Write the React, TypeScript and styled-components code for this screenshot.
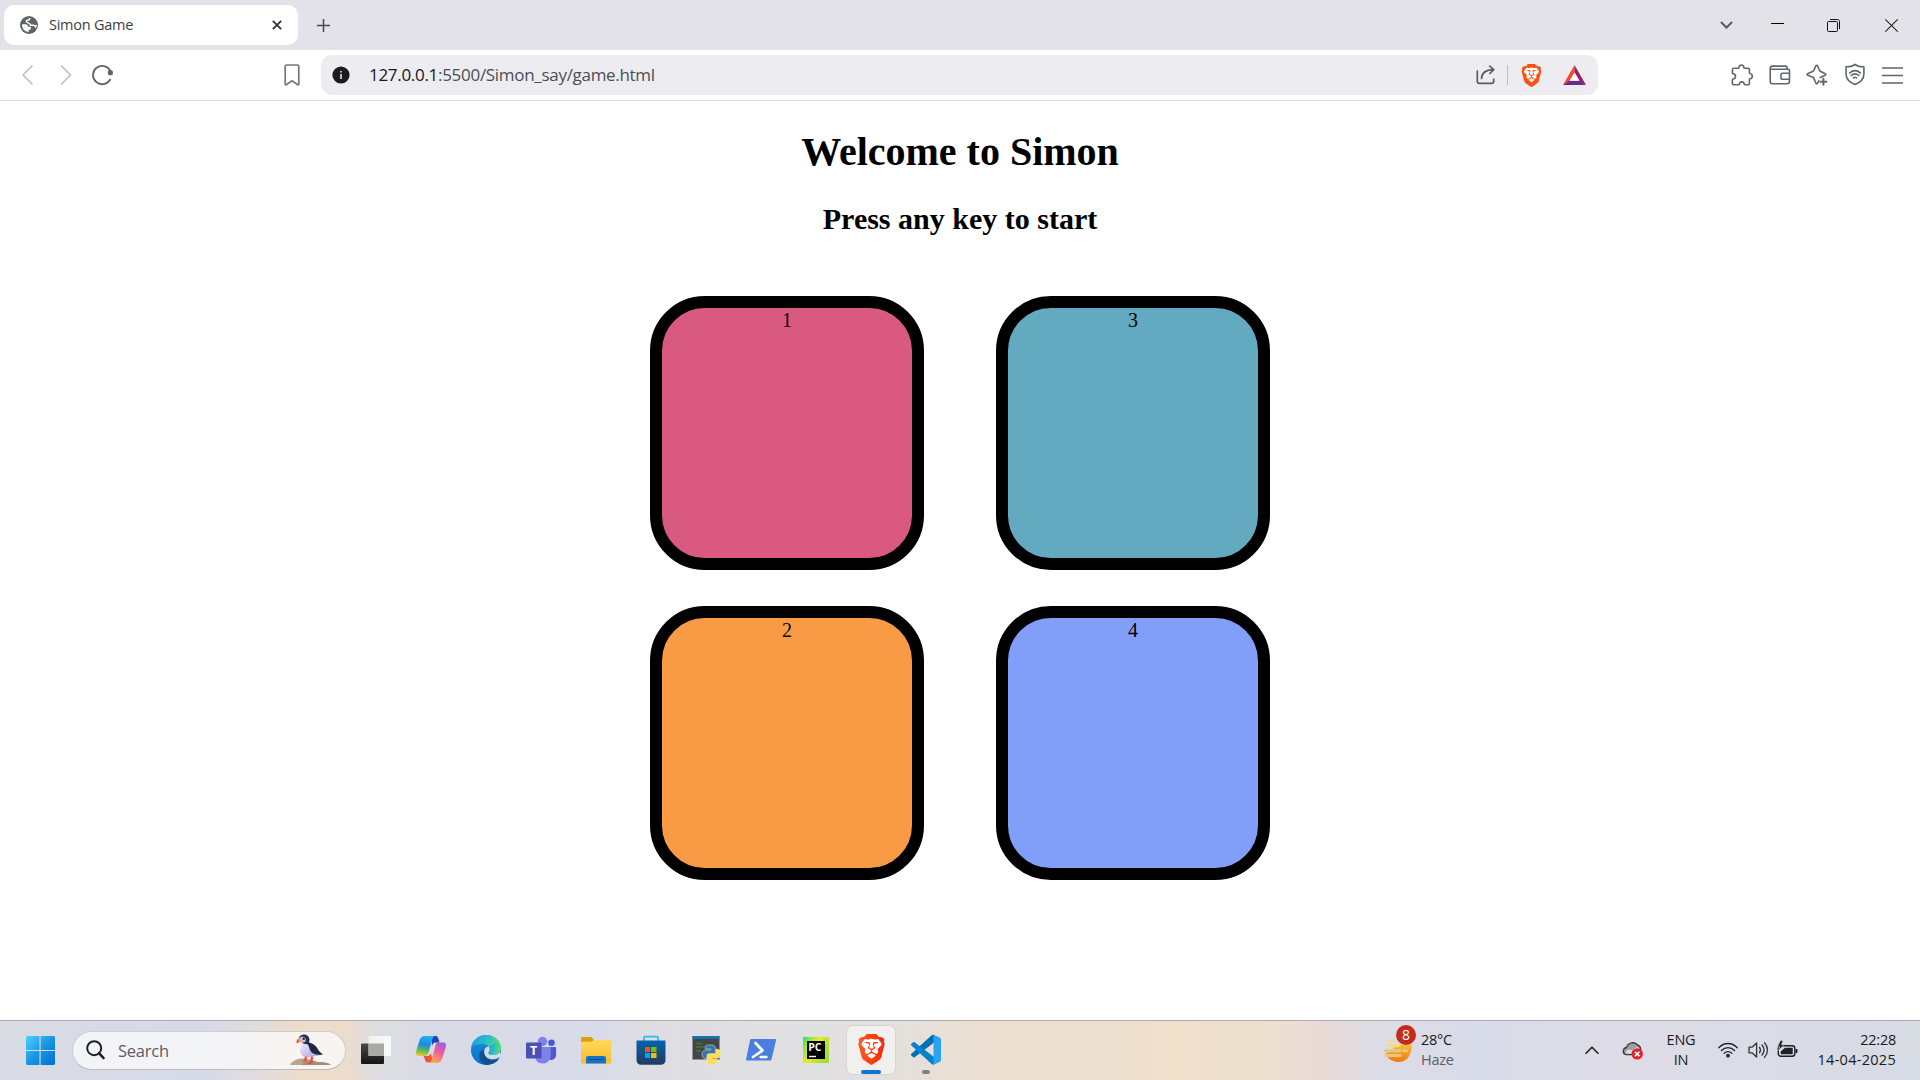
import React from 'react';
import styled, { createGlobalStyle } from 'styled-components';
import { SiBrave } from 'react-icons/si';

const GlobalStyle = createGlobalStyle`
  * { box-sizing: border-box; }
  body { margin: 0; background: #fff; overflow: hidden; }
  svg { display: block; flex: none; overflow: visible; }
`;

const ui = `"Open Sans", "Noto Sans", sans-serif`;

const Screen = styled.div`
  width: 1920px;
  height: 1080px;
  display: flex;
  flex-direction: column;
  background: #fff;
`;

/* ---------- Browser chrome ---------- */

const TabStrip = styled.header`
  height: 50px;
  flex: none;
  display: flex;
  align-items: center;
  padding-left: 4px;
  background: #e3e2e8;
`;

const Tab = styled.div`
  width: 294px;
  height: 40px;
  display: flex;
  align-items: center;
  padding: 0 16px;
  border-radius: 10px;
  background: #fff;
`;

const TabTitle = styled.span`
  flex: 1;
  margin-left: 11px;
  font: 400 14.5px/20px ${ui};
  letter-spacing: -0.25px;
  color: #3b3e43;
`;

const NewTab = styled.div`
  margin-left: 19px;
`;

const WindowControls = styled.div`
  margin-left: auto;
  display: flex;
  align-items: center;
  padding-right: 22px;
`;

const Spaced = styled.div<{ $left: number }>`
  margin-left: ${p => p.$left}px;
  flex: none;
`;

const Toolbar = styled.nav`
  height: 51px;
  flex: none;
  display: flex;
  align-items: center;
  border-bottom: 1px solid #e1e0e6;
  background: #fff;
`;

const AddressBar = styled.div`
  width: 1277px;
  height: 40px;
  margin-left: 21px;
  display: flex;
  align-items: center;
  padding: 0 12px 0 11px;
  border-radius: 11px;
  background: #ededf1;
`;

const Url = styled.span`
  flex: 1;
  margin-left: 19px;
  font: 400 17px/24px ${ui};
  letter-spacing: -0.3px;
  color: #4c4d54;
  b { font-weight: 400; color: #16161c; }
`;

const Divider = styled.i`
  width: 1px;
  height: 20px;
  margin-left: 11px;
  background: #bcbdc6;
`;

/* ---------- Game page ---------- */

const Page = styled.main`
  flex: 1;
  min-height: 0;
  display: flex;
  flex-direction: column;
  align-items: center;
  font-family: "Liberation Serif", "Times New Roman", serif;
  color: #000;
`;

const Title = styled.h1`
  margin: 28px 0 0;
  font-size: 40px;
  line-height: 46px;
`;

const Subtitle = styled.h2`
  margin: 27px 0 0;
  font-size: 30px;
  line-height: 34px;
`;

const Board = styled.section`
  margin-top: 60px;
  display: grid;
  grid-template-columns: repeat(2, 274px);
  grid-auto-rows: 274px;
  gap: 36px 72px;
`;

const Pad = styled.div<{ $color: string }>`
  border: 12px solid #000;
  border-radius: 20%;
  background: ${p => p.$color};
  font-size: 20px;
  line-height: 24px;
  text-align: center;
`;

/* ---------- Taskbar ---------- */

const TaskbarRoot = styled.footer`
  height: 60px;
  flex: none;
  display: flex;
  align-items: center;
  padding-bottom: 1px;
  border-top: 1px solid #aaa9ad;
  font-family: ${ui};
  background: linear-gradient(90deg,
    #d9dbe4 0, #d6dae8 200px, #dedcdf 250px, #ecdcca 300px, #ecdccc 345px,
    #dedce2 378px, #d8dbe6 430px, #d8dbe8 590px, #dddde3 650px, #e0e0e2 760px,
    #e2e0e0 870px, #e5dfdb 900px, #ebe0d3 980px, #ece0d1 1100px, #f1e0cc 1175px,
    #ece0d0 1260px, #e8dad6 1325px, #dddce6 1375px,
    #d8dbe8 1480px, #dddce7 1600px, #dcdbe6 1680px, #d9dce6 1780px, #d7dbe4 1920px);
`;

const Slot = styled.div<{ $active?: boolean }>`
  width: 48px;
  height: 48px;
  margin-right: 7px;
  flex: none;
  display: flex;
  flex-direction: column;
  align-items: center;
  padding-top: 8px;
  border-radius: 6px;
  background: ${p => (p.$active ? '#f1f0ef' : 'transparent')};
  box-shadow: ${p => (p.$active ? '0 0 0 1px rgba(120,110,100,.09)' : 'none')};
`;

const Indicator = styled.i<{ $width: number; $color: string }>`
  width: ${p => p.$width}px;
  height: 4px;
  margin-top: auto;
  flex: none;
  border-radius: 2px;
  background: ${p => p.$color};
`;

const SearchBox = styled.div`
  width: 274px;
  height: 39px;
  margin: 0 6px 0 1px;
  flex: none;
  display: flex;
  align-items: center;
  padding: 0 13px;
  border: 1px solid #cfcdd2;
  border-bottom-color: #bdbbc0;
  border-radius: 20px;
  background: linear-gradient(90deg, #f3f4f8 0, #f4f4f7 60%, #f9f4ef 82%, #f8f4f0 100%);
`;

const SearchText = styled.span`
  flex: 1;
  margin-left: 13px;
  font-size: 16.5px;
  letter-spacing: -0.25px;
  color: #5b5c60;
`;

const Weather = styled.div`
  margin-left: 425px;
  display: flex;
  align-items: center;
  gap: 7px;
`;

const WeatherIcon = styled.div`
  position: relative;
  width: 32px;
`;

const Badge = styled.span`
  position: absolute;
  top: -12px;
  left: 14px;
  width: 20px;
  height: 20px;
  border-radius: 50%;
  background: #c42b1c;
  color: #fff;
  font-size: 14px;
  line-height: 20px;
  text-align: center;
`;

const Lines = styled.div<{ $align: string; $width: number }>`
  width: ${p => p.$width}px;
  flex: none;
  text-align: ${p => p.$align};
  white-space: nowrap;
  font-size: 14.5px;
  line-height: 20px;
  letter-spacing: -0.25px;
  color: #1b1b1e;
`;

const Muted = styled.div`
  color: #5d5d63;
`;

const DateText = styled.div`
  letter-spacing: 0.28px;
`;

const Tray = styled.div`
  margin-left: auto;
  margin-right: 24px;
  display: flex;
  align-items: center;
`;

/* ---------- Icons ---------- */

const line = { fill: 'none', strokeLinecap: 'round', strokeLinejoin: 'round' } as const;

const Globe = () => (
  <svg width="18" height="18" viewBox="0 0 18 18">
    <circle cx="9" cy="9" r="9" fill="#5f6368" />
    <path d="M2 8.300h3.400c1.900 0 2.600.9 2.600 2.500h1.700c.9 0 1.300.5 1.300 1.300 0 1.600-.9 1.900-2.300 1.900v1.900C4.900 15.900 1.900 12.800 2 8.300z" fill="#fff" />
    <path d="M9.800 2.100c0 1.700-.9 2.200-2.600 2.200-.8 0-.9.6-.9 1.600 1.800 0 1.600 1.700 3 1.700 1 0 1.100 1 1.100 1.600h2.800c1.500 0 1.900.8 2.500 1.700l.5-2" fill="none" stroke="#fff" strokeWidth="1.400" />
  </svg>
);

const BraveMark = ({ size, gradient }: { size: number; gradient?: boolean }) => (
  <svg width={size} height={size} viewBox="0 0 24 24">
    <defs>
      <linearGradient id="braveFill" x1="0" x2="1">
        <stop offset="0" stopColor="#ff5a20" />
        <stop offset="1" stopColor="#f5260a" />
      </linearGradient>
    </defs>
    <path d="M6 3h12l2.500 4-2.500 10-6 4-6-4L3.500 7z" fill="#fff" />
    <SiBrave size={24} fill={gradient ? 'url(#braveFill)' : '#fb5010'} />
  </svg>
);

const Toolicons = {
  chevron: (flip: boolean) => (
    <svg width="12" height="20" viewBox="0 0 12 20">
      <path d={flip ? 'M1.500 1l9 9-9 9' : 'M10 1l-9 9 9 9'} {...line} stroke="#c0c1c5" strokeWidth="1.700" />
    </svg>
  ),
  reload: (
    <svg width="22" height="22" viewBox="0 0 22 22">
      <path d="M18.100 15.800A9.200 9.200 0 1 1 18.400 6.800" {...line} stroke="#5f636a" strokeWidth="1.800" />
      <circle cx="18.400" cy="8.700" r="2.600" fill="#5f636a" />
    </svg>
  ),
  bookmark: (
    <svg width="16" height="22" viewBox="0 0 16 22">
      <path d="M2.600 1h10.800c.8 0 1.400.6 1.400 1.400V20.200c0 .6-.7.9-1.100.5L8 16.800l-5.700 3.900c-.5.400-1.100.100-1.100-.5V2.400C1.200 1.600 1.800 1 2.600 1z" {...line} stroke="#75787f" strokeWidth="1.700" />
    </svg>
  ),
  info: (
    <svg width="18" height="18" viewBox="0 0 18 18">
      <circle cx="9" cy="9" r="8.600" fill="#1b1b20" />
      <path d="M9 8v5M9 5.100v1.300" stroke="#f2f2f5" strokeWidth="1.500" />
    </svg>
  ),
  share: (
    <svg width="20" height="20" viewBox="0 0 20 20">
      <path d="M1.300 6v10.200c0 1.200.9 2.100 2.100 2.100h12.200c1.200 0 2.100-.9 2.100-2.100V14" {...line} stroke="#5b5c66" strokeWidth="1.700" />
      <path d="M5.500 13.500C5.700 8 9.500 4.800 17.500 4.600M13.600 1.200l4.200 3.400-4 3.900" {...line} stroke="#5b5c66" strokeWidth="1.700" />
    </svg>
  ),
  bat: (
    <svg width="23" height="20" viewBox="0 0 23 20">
      <path d="M11.500 0v7.500L6.600 16 0 20z" fill="#ff4724" />
      <path d="M11.500 0v7.500l5 8.500L23 20z" fill="#9e1f63" />
      <path d="M0 20l6.600-4.500h9.900L23 20z" fill="#662d91" />
      <path d="M11.500 7.500l4.900 8.200H6.600z" fill="#fff" />
    </svg>
  ),
  puzzle: (
    <svg width="22" height="22" viewBox="0 0 22 22">
      <path d="M3 4.300h4.200c.5 0 .8-.3.800-.8C8.200 2 9 1 10.400 1s2.300 1 2.500 2.500c0 .5.300.8.800.8h3.700c.6 0 1 .4 1 1v3.500c0 .5.300.8.800.9 1.200.200 2.100 1.200 2.100 2.500s-.9 2.300-2.100 2.500c-.5.100-.8.400-.8.900v4c0 .7-.5 1.200-1.200 1.200h-3.100c-.6 0-.8-.4-.9-.9-.2-1.200-1.100-2-2.400-2s-2.200.8-2.400 2c-.1.500-.3.900-.9.900H2.600c-.7 0-1.200-.5-1.200-1.200v-3.800c0-.5.300-.8.800-.8 1.400-.2 2.300-1.200 2.300-2.600S3.600 10 2.200 9.800c-.5 0-.8-.3-.8-.8V5.900c0-1 .600-1.600 1.600-1.600z" {...line} stroke="#62666c" strokeWidth="1.600" />
    </svg>
  ),
  wallet: (
    <svg width="22" height="20" viewBox="0 0 22 20">
      <path d="M20.500 8V5.600c0-.8-.6-1.400-1.400-1.400H1.200M1.200 3.500C1.200 2 2 1.100 3.400 1.100h13c1 0 1.800.8 1.800 1.800v1.300M1.200 3.400v13.200c0 1.200.9 2.200 2.200 2.200h14.900c1.300 0 2.200-1 2.200-2.200V8.300h-7.100c-.8 0-1.400.6-1.400 1.400v3.200c0 .8.6 1.400 1.400 1.400h7.100" {...line} stroke="#62666c" strokeWidth="1.600" />
    </svg>
  ),
  sparkle: (
    <svg width="22" height="22" viewBox="0 0 22 22">
      <path d="M12.800 16.800l-1.400 2.500c-.4.700-1.200.7-1.500 0L7.500 13.600 1.700 11.200c-.7-.4-.7-1.200 0-1.500L7.500 7 10 1.700c.3-.7 1.100-.7 1.500 0L13.800 7l5.400 2.700c.7.300.7 1.100 0 1.500l-5 2.200" {...line} stroke="#62666c" strokeWidth="1.600" />
      <path d="M17.400 14.800v6M14.400 17.800h6" {...line} stroke="#62666c" strokeWidth="2" />
    </svg>
  ),
  shield: (
    <svg width="20" height="22" viewBox="0 0 20 22">
      <path d="M10 .4c2 1.700 5 2.500 8.900 2.400v7.500c0 4.500-3.200 7.900-8.900 10.300C4.300 18.200 1.100 14.800 1.100 10.300V2.800C5 2.900 8 2.100 10 .4z" {...line} stroke="#62666c" strokeWidth="1.600" />
      <path d="M4.700 8.900c3.200-2.700 7.400-2.700 10.600 0M6.300 11.400c2.300-1.900 5.100-1.900 7.400 0M8.400 13.800c1.100-.7 2.100-.7 3.200 0" {...line} stroke="#62666c" strokeWidth="1.600" />
    </svg>
  ),
  menu: (
    <svg width="21" height="20" viewBox="0 0 21 20">
      <path d="M0 3h21M0 10.500h21M0 18h21" stroke="#5f636a" strokeWidth="1.600" />
    </svg>
  ),
};

const Windows = () => (
  <svg width="32" height="32" viewBox="0 0 32 32">
    <defs>
      <linearGradient id="winFill" x1="0" y1="0" x2="1" y2="1">
        <stop offset="0" stopColor="#4fd0ff" />
        <stop offset=".5" stopColor="#1696e2" />
        <stop offset="1" stopColor="#0070d0" />
      </linearGradient>
    </defs>
    <path d="M3 2h12.500v14H2V3z M16.600 2H30l1 1v13H16.600z M2 17h13.500v14H3l-1-1z M16.600 17H31V30l-1 1H16.600z" fill="url(#winFill)" />
  </svg>
);

const Magnifier = () => (
  <svg width="19" height="20" viewBox="0 0 19 20">
    <circle cx="8.200" cy="8.200" r="7" fill="none" stroke="#202024" strokeWidth="2" />
    <path d="M13 13.200l4.600 5" stroke="#202024" strokeWidth="2.500" strokeLinecap="round" />
  </svg>
);

const Puffin = () => (
  <svg width="42" height="32" viewBox="0 0 42 32">
    <defs>
      <linearGradient id="belly" x1="0" y1="0" x2="1" y2="1">
        <stop offset="0" stopColor="#f3effa" />
        <stop offset="1" stopColor="#a99ad8" />
      </linearGradient>
    </defs>
    <path d="M0 31c2-4 7-6.500 13-6.500 7 0 9 3 15 3.500 6 .2 10 .5 13 3z" fill="#b8a78e" />
    <path d="M11 31c4-4 12-5 17-3 6 .2 10 .5 13 3z" fill="#9f9079" />
    <path d="M12.500 7c-1 4-3.500 9-1.500 13 2 3.500 7 4 11 2.500L31 21 20 8z" fill="url(#belly)" />
    <path d="M12 8.500c2 2 5 2 7 1l.5-4C19 1.500 15.500 0 12.500.8 10 1.500 8.500 3 9 5z" fill="#29304a" />
    <path d="M9.200 4.500c.7-2 4.500-2.500 6-.8 1.500 1.800.5 4.600-1.700 4.800-2 .2-4.300-1-4.300-4z" fill="#c5bfdc" />
    <circle cx="13.800" cy="4.800" r="1.200" fill="#20263b" />
    <path d="M9.500 4.300C7.500 4.600 6.300 6 6.500 9.200L11 7.500z" fill="#e8432e" />
    <path d="M9.800 4.200l-1.600.8.800 3.400 1.700-.7z" fill="#f2b648" />
    <path d="M18 8.500c5 .5 8 3 10 7 1.200 2 3.500 3.500 5 5.200-4 .5-9 0-11.500-2.500C18.500 15 20 12 16 8.800z" fill="#202944" />
    <path d="M15 22.500l-1 3.500-2 1.500h6l-1.500-1.800.5-3zM21 22.500l-1 5-3 2.300 4.500-.3 2-2-.8-1.500.5-3.500z" fill="#ef4b35" />
  </svg>
);

const TaskView = () => (
  <svg width="32" height="32" viewBox="0 0 32 32">
    <defs>
      <linearGradient id="tvDark" x2="0" y2="1"><stop stopColor="#484848" /><stop offset="1" stopColor="#151515" /></linearGradient>
      <linearGradient id="tvLight" x2="1" y2=".3"><stop stopColor="#f4f4f4" /><stop offset="1" stopColor="#fff" /></linearGradient>
    </defs>
    <rect x="1" y="9.500" width="23" height="20.500" rx="1" fill="url(#tvDark)" />
    <rect x="8.500" y="2" width="22.500" height="20" rx="1" fill="url(#tvLight)" opacity=".85" />
    <path d="M8.500 9.500H24V22H8.500z" fill="#a9a9a8" />
  </svg>
);

const Copilot = () => (
  <svg width="32" height="32" viewBox="0 0 32 32">
    <defs>
      <linearGradient id="cpA" x1=".4" y1="0" x2=".2" y2="1"><stop stopColor="#22b0f0" /><stop offset=".4" stopColor="#178be0" /><stop offset=".7" stopColor="#62b75c" /><stop offset="1" stopColor="#f1cf20" /></linearGradient>
      <linearGradient id="cpB" x1=".8" y1="0" x2=".3" y2="1"><stop stopColor="#a05be8" /><stop offset=".45" stopColor="#ee5d9e" /><stop offset="1" stopColor="#ffa64d" /></linearGradient>
    </defs>
    <path d="M16 2h4.500c2.300 0 2.700 2 3.300 4l.7 2.500h-4.200c-2 0-2.600 1.200-3.300 3.500z" fill="#1c44bd" />
    <path d="M8.500 22h4c2 0 2.700-1 3.400-3l2.200 9.500H13c-2.300 0-2.800-2-3.400-4z" fill="#f05535" />
    <path d="M9.300 2H20c-1.800.5-2.400 2.300-3 4.500l-3.500 12c-.6 2-1.200 3.500-3.600 3.500H4c-3 0-3.600-2-2.700-5.500l3.200-10C5.400 3.500 7 2 9.300 2z" fill="url(#cpA)" />
    <path d="M22 8.500h6c3 0 3.500 2.200 2.600 5.500l-3.300 10c-1 3-2.500 4.800-5 4.800H13.800c2-.4 2.600-2.300 3.200-4.300l3.200-12c.4-2 .7-4 1.800-4z" fill="url(#cpB)" />
  </svg>
);

const Edge = () => (
  <svg width="32" height="32" viewBox="0 0 32 32">
    <defs>
      <linearGradient id="edTop" x1="0" x2="1" y1=".3" y2=".6"><stop stopColor="#1a9be0" /><stop offset=".5" stopColor="#2ec0c8" /><stop offset="1" stopColor="#69df4a" /></linearGradient>
      <linearGradient id="edLeft" x2="0" y2="1"><stop stopColor="#1b91d8" /><stop offset="1" stopColor="#0b6fd0" /></linearGradient>
    </defs>
    <circle cx="16" cy="16" r="15" fill="url(#edLeft)" />
    <path d="M14 15c-3.500 5-.5 11 6 12 3 .4 6-.3 8.500-2.500C26 29 21 31.200 16 31c-6-1-8-9-6-13z" fill="#12508f" />
    <path d="M1.300 13C2.500 6 8.500 1 16 1c8.500 0 15 5.800 15 12.500 0 5-4 7.500-8 7.500-3 0-5-1-4.500-2 .8-1.500 1.300-2 1.300-3.500 0-3-3-5.500-8-5.500-4.500 0-8.500 1-10.500 3z" fill="url(#edTop)" />
    <path d="M18.800 12.500c1.500 2 1 4-.2 6-.8 1.500 1.600 2.500 4.400 2.500 3 0 5-1 7-3l1 4-3 2.500c-8 2.500-14-1-14-6.500 0-3 2-5.500 4.800-5.500z" fill="#d8dbe6" />
    <path d="M18.900 12.500c2.500 2.400.2 5-.3 6.200-.5 1.500 1.700 2.300 4.400 2.300 5 0 8-3.500 8-7.500l-5-5z" fill="url(#edTop)" />
    <path d="M14.500 15.500c-1.500 4.500 1.500 9.500 7 10.500 2.500.4 5-.3 8-3-.5 2.500-3 5-6 6.500-6 1-12-4-11-11z" fill="#124f8e" />
  </svg>
);

const Teams = () => (
  <svg width="32" height="32" viewBox="0 0 32 32">
    <circle cx="17.500" cy="7.500" r="4.700" fill="#7b83eb" />
    <circle cx="26.500" cy="8.700" r="3.300" fill="#5059c9" />
    <path d="M22 13h8.200c.6 0 .9.400.9 1v6.500c0 3-2 5.500-5 5.500-2 0-4-1-4.100-4z" fill="#5059c9" />
    <path d="M10 13h14.700c.7 0 1 .5 1 1.200v7c0 5-3.500 8.300-8.200 8.300-4.500 0-7.500-3-7.500-8z" fill="#7b83eb" />
    <rect x="1" y="8.500" width="15.500" height="16" rx="1" fill="#4b50b5" />
    <text x="8.700" y="21" textAnchor="middle" fontFamily="Open Sans" fontWeight="700" fontSize="12.500" fill="#fff">T</text>
  </svg>
);

const Folder = () => (
  <svg width="32" height="32" viewBox="0 0 32 32">
    <defs><linearGradient id="fold" x2="0" y2="1"><stop stopColor="#ffd95e" /><stop offset="1" stopColor="#f8bd2c" /></linearGradient></defs>
    <path d="M1 4.500C1 3.600 1.600 3 2.500 3h7.800c.6 0 1 .2 1.400.6L14 6H31v6H1z" fill="#df9d08" />
    <path d="M1 7.700h10.500L14 6h16c.6 0 1 .4 1 1v22c0 .5-.4.500-1 .500H2c-.6 0-1-.4-1-1z" fill="url(#fold)" />
    <path d="M6 29.500v-5.200c0-1.500.8-2.300 2.300-2.300h15.400c1.500 0 2.300.8 2.300 2.300v5.200z" fill="#1373c6" />
    <path d="M9.500 25.500h13" stroke="#0b4684" strokeWidth="1.200" strokeLinecap="round" />
  </svg>
);

const Store = () => (
  <svg width="32" height="32" viewBox="0 0 32 32">
    <defs><linearGradient id="bag" x2="0" y2="1"><stop stopColor="#0564ae" /><stop offset="1" stopColor="#223a5f" /></linearGradient></defs>
    <path d="M9 7V3.500c0-.5.300-.800.800-.800h12.400c.5 0 .8.300.8.800V7" fill="none" stroke="#26bdf2" strokeWidth="1.700" />
    <path d="M1.500 6.500h29V26c0 3-1.800 4.800-4.800 4.800H6.300c-3 0-4.800-1.800-4.800-4.800z" fill="url(#bag)" />
    <path d="M10 13h5v5h-5z" fill="#f25022" /><path d="M16 13h5.500v5H16z" fill="#7fba00" />
    <path d="M10 19h5v5h-5z" fill="#00a4ef" /><path d="M16 19h5.500v5H16z" fill="#ffb900" />
  </svg>
);

const PythonConsole = () => (
  <svg width="32" height="32" viewBox="0 0 32 32">
    <path d="M2.500 2h27v23.500h-27z" fill="#454545" />
    <path d="M2.500 2h27v3h-27z" fill="#1a72ad" />
    <path d="M6 9.500h6M6 13h9M6 17h5" stroke="#3f7a42" strokeWidth="1.300" />
    <path d="M17.500 11h4.500c2 0 3.300 1.200 3.300 3.200V20h-8v5c-3.300 0-5.300-1.500-5.300-4.500 0-3 2-4.500 4-4.500h5v-1h-5.500c-.3-3 .5-4 2-4z" fill="#3774a8" stroke="#c9d8e6" strokeWidth=".6" />
    <path d="M26 15c3 0 4.800 1.600 4.800 4.700 0 3-1.800 4.600-4.300 4.600h-4.500v1h5c.3 3.500-1.500 5.500-5 5.500-3 0-5-1-5-3.300v-5c0-2 1.300-2.700 3.300-2.700H26z" fill="#ffdc50" stroke="#f4ecc5" strokeWidth=".6" />
  </svg>
);

const PowerShell = () => (
  <svg width="32" height="32" viewBox="0 0 32 32">
    <path d="M6.500 5h23.300c.9 0 1.400.6 1.200 1.500L26.600 25c-.2.900-.8 1.500-1.700 1.500H2.200c-.9 0-1.300-.6-1.100-1.500L5 6.500C5.100 5.600 5.700 5 6.500 5z" fill="#4c7ee0" />
    <path d="M10.500 9l7 7.500-9.500 6.500" fill="none" stroke="#fff" strokeWidth="2.700" strokeLinejoin="round" strokeLinecap="round" />
    <path d="M15.500 23h6" stroke="#fff" strokeWidth="2.300" strokeLinecap="round" />
  </svg>
);

const PyCharm = () => (
  <svg width="32" height="32" viewBox="0 0 32 32">
    <defs><linearGradient id="pc" x1="0" y1="0" x2="1" y2=".6"><stop stopColor="#21e080" /><stop offset=".25" stopColor="#9be83b" /><stop offset=".5" stopColor="#e8ea22" /><stop offset="1" stopColor="#9fdc3c" /></linearGradient></defs>
    <path d="M3 3h26v26H3z" fill="url(#pc)" />
    <path d="M7 7h18v18H7z" fill="#000" />
    <text x="8.200" y="16.800" fontFamily="Open Sans" fontWeight="700" fontSize="10.500" fill="#fff">PC</text>
    <path d="M9 22.500h7" stroke="#fff" strokeWidth="1.400" />
  </svg>
);

const VSCode = () => (
  <svg width="30" height="31" viewBox="0 -2 100 103">
    <path d="M96.500 10.800L75.900.9c-2.400-1.200-5.200-.7-7.100 1.200L1.300 63.600c-1.800 1.700-1.800 4.500 0 6.200l5.500 5c1.500 1.300 3.700 1.400 5.300.2L93.400 13.400c2.700-2.100 6.600-.1 6.600 3.300v-.2c0-2.400-1.400-4.600-3.500-5.700z" fill="#0070b5" />
    <path d="M96.500 89.200l-20.600 9.900c-2.400 1.200-5.200.7-7.100-1.200L1.300 36.400c-1.800-1.700-1.800-4.500 0-6.200l5.500-5c1.500-1.300 3.700-1.400 5.300-.2l81.300 61.600c2.700 2.100 6.600.1 6.600-3.300v.2c0 2.400-1.400 4.600-3.500 5.700z" fill="#0883cb" />
    <path d="M75.900 99.100c-2.400 1.200-5.200.7-7.100-1.200 2.300 2.300 6.200.7 6.200-2.600V4.700c0-3.300-3.900-4.900-6.200-2.600C70.700.2 73.500-.3 75.900.9l20.600 9.900C98.600 11.900 100 14 100 16.400v67.200c0 2.400-1.400 4.600-3.500 5.600z" fill="#27a5f2" />
  </svg>
);

const Haze = () => (
  <svg width="32" height="26" viewBox="0 0 32 26">
    <defs><linearGradient id="sun" x2="0" y2="1"><stop stopColor="#fdbf36" /><stop offset="1" stopColor="#ed7712" /></linearGradient></defs>
    <path d="M3.500 16C12 15 10 9 17 8l13-1c0 10-4.500 18-13.500 18C10 25 5 21.500 3.500 16z" fill="url(#sun)" />
    <path d="M7.500 3.500h3.500M7.500 8.700h9" stroke="#f8da77" strokeWidth="3" strokeLinecap="round" />
    <path d="M3 13.700h15M21.500 13.700h3M4 18.500h14" stroke="#e6ca7d" strokeWidth="3" strokeLinecap="round" />
  </svg>
);

const Cloud = () => (
  <svg width="22" height="20" viewBox="0 0 22 20">
    <path d="M4.500 14.500C.500 14.500 0 8.500 4.500 7.500 6 2.500 12.500 1 15.500 5c2.500.8 3.500 3 3 6l-7 3.500z" fill="#9f9fa2" stroke="#3c3c3e" strokeWidth="1.400" />
    <path d="M3.500 13.800C3.500 10 7 8.500 10 10l5-3c2 1 3 2 3 4l-8 2.800z" fill="#dedede" />
    <circle cx="15.200" cy="13.900" r="5.700" fill="#de2530" />
    <path d="M13 11.700l4.400 4.400M17.400 11.700L13 16.100" stroke="#fff" strokeWidth="1.500" />
  </svg>
);

const Wifi = () => (
  <svg width="20" height="16" viewBox="0 0 20 16">
    <path d="M.8 5.700C6.200.1 13.800.1 19.200 5.700M3.500 8.500c3.800-3.900 9.200-3.900 13 0M6.200 11.300c2.200-2.200 5.400-2.200 7.600 0" {...line} stroke="#252528" strokeWidth="1.400" />
    <circle cx="10" cy="13.700" r="1.900" fill="#252528" />
  </svg>
);

const Speaker = () => (
  <svg width="20" height="18" viewBox="0 0 20 18">
    <path d="M1 6.200h3L8.600 2v14L4 11.800H1z" {...line} stroke="#333336" strokeWidth="1.300" />
    <path d="M11.500 6.300c1.200 1.600 1.200 3.800 0 5.400M14 4c2.500 3 2.500 7 0 10M16.500 1.800c4 4.300 4 10.100 0 14.400" {...line} stroke="#333336" strokeWidth="1.300" />
  </svg>
);

const Battery = () => (
  <svg width="21" height="18" viewBox="0 0 21 18">
    <rect x="1.300" y="4.700" width="16.500" height="10.500" rx="2.500" fill="none" stroke="#202024" strokeWidth="1.400" />
    <path d="M3.700 13.200V10.500L8 6.700h7.700v6.500zM18.500 8h1c.7 0 1 .4 1 1v2c0 .6-.3 1-1 1h-1z" fill="#202024" />
    <path d="M3.500-.5L.5 5.700h2.300L1.500 9.500 7 3.800H4.500L6-.5z" fill="#202024" stroke="#dcdce6" strokeWidth=".5" />
  </svg>
);

/* ---------- App ---------- */

const pads = [
  { label: '1', color: '#d95980' },
  { label: '3', color: '#63aac0' },
  { label: '2', color: '#f99b45' },
  { label: '4', color: '#819ff9' },
];

const pinned = [TaskView, Copilot, Edge, Teams, Folder, Store, PythonConsole, PowerShell, PyCharm];

export default function App() {
  return (
    <Screen>
      <GlobalStyle />
      <TabStrip>
        <Tab>
          <Globe />
          <TabTitle>Simon Game</TabTitle>
          <svg width="10" height="10" viewBox="0 0 10 10">
            <path d="M.8.8l8.400 8.400M9.200.8L.8 9.200" stroke="#35363b" strokeWidth="1.900" />
          </svg>
        </Tab>
        <NewTab>
          <svg width="13" height="13" viewBox="0 0 13 13">
            <path d="M6.500 0v13M0 6.500h13" stroke="#46474d" strokeWidth="1.500" />
          </svg>
        </NewTab>
        <WindowControls>
          <svg width="13" height="8" viewBox="0 0 13 8">
            <path d="M.9 1l5.600 5.500L12.100 1" fill="none" stroke="#5a5b61" strokeWidth="2" />
          </svg>
          <Spaced $left={38}>
            <svg width="13" height="13" viewBox="0 0 13 13"><path d="M0 4.500h13" stroke="#000" /></svg>
          </Spaced>
          <Spaced $left={43}>
            <svg width="13" height="13" viewBox="0 0 13 13">
              <rect x=".5" y="2.500" width="10" height="10" rx="1" fill="none" stroke="#111" />
              <path d="M3 .5h7.500c1.200 0 2 .8 2 2V10" fill="none" stroke="#111" />
            </svg>
          </Spaced>
          <Spaced $left={45}>
            <svg width="13" height="13" viewBox="0 0 13 13"><path d="M.3.3l12.400 12.400M12.700.3L.3 12.700" stroke="#222" strokeWidth="1.100" /></svg>
          </Spaced>
        </WindowControls>
      </TabStrip>

      <Toolbar>
        <Spaced $left={22}>{Toolicons.chevron(false)}</Spaced>
        <Spaced $left={26}>{Toolicons.chevron(true)}</Spaced>
        <Spaced $left={20}>{Toolicons.reload}</Spaced>
        <Spaced $left={170}>{Toolicons.bookmark}</Spaced>
        <AddressBar>
          {Toolicons.info}
          <Url><b>127.0.0.1</b>:5500/Simon_say/game.html</Url>
          {Toolicons.share}
          <Divider />
          <Spaced $left={12}><BraveMark size={23} /></Spaced>
          <Spaced $left={20}>{Toolicons.bat}</Spaced>
        </AddressBar>
        <Spaced $left={133}>{Toolicons.puzzle}</Spaced>
        <Spaced $left={16}>{Toolicons.wallet}</Spaced>
        <Spaced $left={15}>{Toolicons.sparkle}</Spaced>
        <Spaced $left={17}>{Toolicons.shield}</Spaced>
        <Spaced $left={17}>{Toolicons.menu}</Spaced>
      </Toolbar>

      <Page>
        <Title>Welcome to Simon</Title>
        <Subtitle>Press any key to start</Subtitle>
        <Board>
          {pads.map(p => <Pad key={p.label} $color={p.color}>{p.label}</Pad>)}
        </Board>
      </Page>

      <TaskbarRoot>
        <Spaced $left={16}><Slot><Windows /></Slot></Spaced>
        <SearchBox>
          <Magnifier />
          <SearchText>Search</SearchText>
          <Puffin />
        </SearchBox>
        {pinned.map((Icon, i) => <Slot key={i}><Icon /></Slot>)}
        <Slot $active>
          <BraveMark size={31} gradient />
          <Indicator $width={20} $color="#0a78d4" />
        </Slot>
        <Slot>
          <VSCode />
          <Indicator $width={8} $color="#85807c" />
        </Slot>
        <Weather>
          <WeatherIcon><Haze /><Badge>8</Badge></WeatherIcon>
          <Lines $align="left" $width={50}>28°C<Muted>Haze</Muted></Lines>
        </Weather>
        <Tray>
          <svg width="14" height="8" viewBox="0 0 14 8">
            <path d="M1 7.200L7 1.200l6 6" {...line} stroke="#1d1d20" strokeWidth="1.600" />
          </svg>
          <Spaced $left={23}><Cloud /></Spaced>
          <Spaced $left={17}><Lines $align="center" $width={40}>ENG<br />IN</Lines></Spaced>
          <Spaced $left={17}><Wifi /></Spaced>
          <Spaced $left={10}><Speaker /></Spaced>
          <Spaced $left={9}><Battery /></Spaced>
          <Spaced $left={18}><Lines $align="right" $width={80}>22:28<DateText>14-04-2025</DateText></Lines></Spaced>
        </Tray>
      </TaskbarRoot>
    </Screen>
  );
}
